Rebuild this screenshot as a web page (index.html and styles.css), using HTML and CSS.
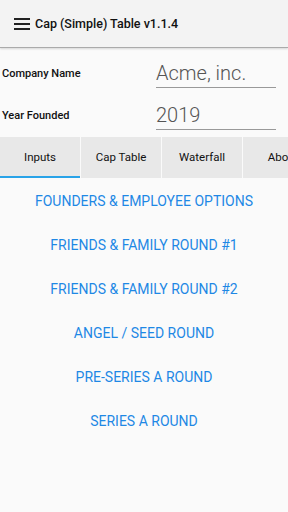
FILE: index.html
```html
<!DOCTYPE html>
<html>
<head>
    <title>Cap (Simple) Table</title>
    <link rel="stylesheet" href="styles.css">
</head>
<body>
    <div class="header">
        <svg class="menu-icon" width="16" height="12" viewBox="0 0 16 12">
            <rect x="0" y="0" width="16" height="2" fill="#222"/>
            <rect x="0" y="5" width="16" height="2" fill="#222"/>
            <rect x="0" y="10" width="16" height="2" fill="#222"/>
        </svg>
        <span class="title">Cap (Simple) Table v1.1.4</span>
    </div>

    <div class="form-row first">
        <label>Company Name</label>
        <div class="field">Acme, inc.</div>
    </div>
    <div class="form-row">
        <label>Year Founded</label>
        <div class="field">2019</div>
    </div>

    <div class="tabs">
        <div class="tab active">Inputs</div>
        <div class="tab">Cap Table</div>
        <div class="tab">Waterfall</div>
        <div class="tab">About</div>
    </div>

    <div class="rounds">
        <button>Founders &amp; Employee Options</button>
        <button>Friends &amp; Family Round #1</button>
        <button>Friends &amp; Family Round #2</button>
        <button>Angel / Seed Round</button>
        <button>Pre-Series A Round</button>
        <button>Series A Round</button>
    </div>
</body>
</html>
```

FILE: styles.css
```css
body {
    margin: 0;
    background: #fafafa;
    font-family: Roboto, "Liberation Sans", sans-serif;
    width: 288px;
    height: 512px;
    overflow: hidden;
}

.header {
    height: 47px;
    background: #f3f3f3;
    display: flex;
    align-items: center;
    padding-left: 14px;
    box-shadow: 0 1px 0 #aaa, 0 2px 2px rgba(0, 0, 0, 0.15);
}
.menu-icon { margin-right: 5px; }
.title {
    font-size: 12.5px;
    font-weight: 500;
    color: #111;
}

.form-row {
    display: flex;
    align-items: flex-end;
    height: 42px;
    padding-left: 2px;
}
.form-row.first { height: 41px; }
label {
    width: 154px;
    font-size: 11px;
    font-weight: 500;
    color: #111;
    padding-bottom: 8px;
}
.field {
    width: 120px;
    font-size: 20px;
    font-weight: 300;
    color: #555;
    border-bottom: 1px solid #999;
    padding-bottom: 3px;
    line-height: 22px;
}

.tabs {
    display: flex;
    gap: 1px;
    margin-top: 7px;
    width: 328px;
}
.tab {
    width: 80px;
    height: 39px;
    background: #e8e8e8;
    font-size: 11.5px;
    color: #111;
    display: flex;
    align-items: center;
    justify-content: center;
    border-bottom: 2px solid #e8e8e8;
}
.tab.active { border-bottom-color: #29a3e8; }

.rounds {
    display: flex;
    flex-direction: column;
    align-items: center;
    padding-top: 1px;
}
.rounds button {
    background: none;
    border: none;
    height: 44px;
    font-family: Roboto, "Liberation Sans", sans-serif;
    font-size: 14px;
    font-weight: 400;
    text-transform: uppercase;
    color: #1e88e5;
    padding: 0;
}
```
